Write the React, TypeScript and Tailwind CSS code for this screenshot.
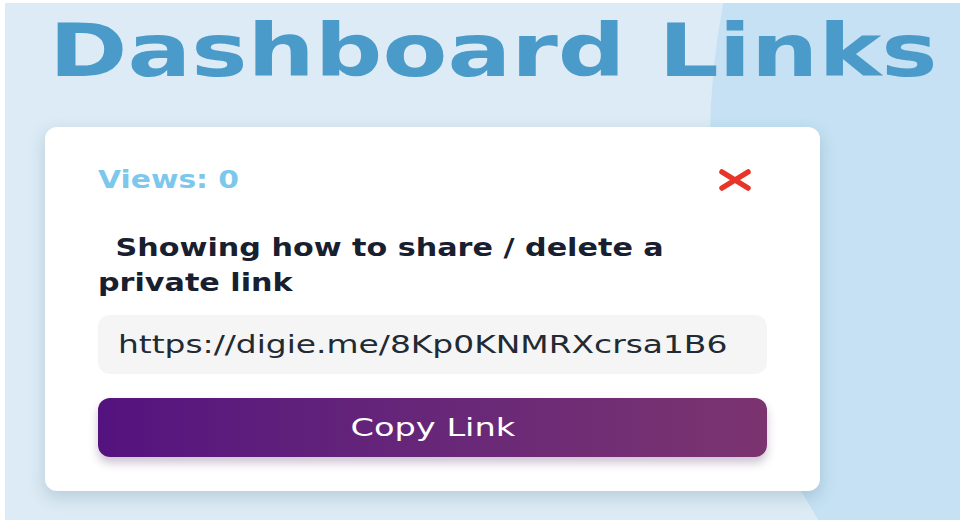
import React from 'react';

const bodyFont = "font-['DejaVu_Sans',_'Liberation_Sans',_sans-serif]";

function CloseIcon() {
    return (
        <svg width="36" height="22" viewBox="0 0 36 22" aria-hidden="true">
            <path d="M5 3 L31 19 M31 3 L5 19" stroke="#e8352a" strokeWidth="5.5" strokeLinecap="round" />
        </svg>
    );
}

export default function App() {
    return (
        <div className="w-full h-[523px] bg-white pl-[5px] pt-[3px] pb-[3px]">
            <div className="relative h-full overflow-hidden bg-[#dcebf5]">
                {/* decorative blob on the right */}
                <div className="absolute left-[705px] top-[-579px] w-[1434px] h-[1434px] rounded-full bg-[#c5e1f3]" />

                <div className="relative flex flex-col">
                    <div className="pl-[44px] pt-[3px] h-[124px]">
                        <h1 className="origin-left scale-x-[1.295] whitespace-nowrap text-[73px] leading-[90px] font-bold text-[#4a9bc9] font-['DejaVu_Sans',_'Liberation_Sans',_sans-serif]">
                            Dashboard Links
                        </h1>
                    </div>

                    <div className={`ml-[40px] w-[775px] h-[364px] rounded-[12px] bg-white shadow-[0_6px_16px_rgba(70,110,140,0.25)] px-[53px] pt-[38px] ${bodyFont}`}>
                        <div className="flex items-center justify-between pr-[14px]">
                            <span className="inline-block origin-left scale-x-[1.24] text-[24px] leading-[30px] font-bold text-[#7cc8ec]">Views: 0</span>
                            <CloseIcon />
                        </div>

                        <h2 className="mt-[36px] origin-left scale-x-[1.258] indent-[14px] text-[24px] leading-[35px] font-bold text-[#182030]">
                            Showing how to share / delete a
                            <br />
                            private link
                        </h2>

                        <div className="mt-[14px] h-[59px] rounded-[12px] bg-[#f5f5f5] flex items-center pl-[20px] text-[24px] text-[#222a33]">
                            <span className="inline-block origin-left scale-x-[1.37]">https://digie.me/8Kp0KNMRXcrsa1B6</span>
                        </div>

                        <button className="mt-[24px] w-full h-[59px] rounded-[12px] bg-gradient-to-r from-[#54127f] to-[#7c3470] shadow-[0_6px_10px_rgba(60,20,80,0.25)] text-white text-[24px]">
                            <span className="inline-block scale-x-[1.4]">Copy Link</span>
                        </button>
                    </div>
                </div>
            </div>
        </div>
    );
}
